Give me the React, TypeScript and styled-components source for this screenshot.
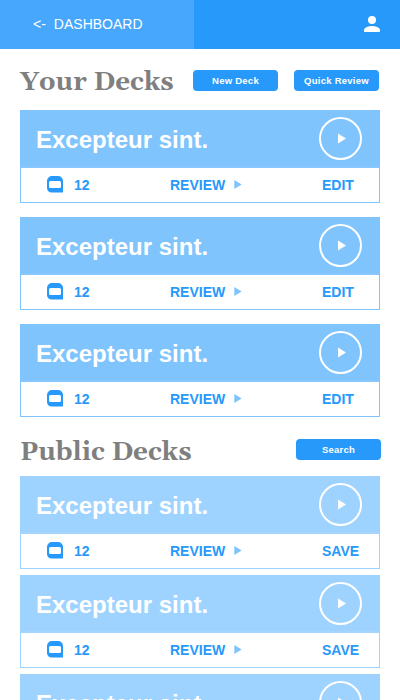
import React from "react";
import styled, { createGlobalStyle } from "styled-components";

const GlobalStyle = createGlobalStyle`
  * { box-sizing: border-box; }
  html, body { margin: 0; padding: 0; background: #fff; }
  body { height: 700px; overflow: hidden; font-family: "Liberation Sans", Arial, sans-serif; }
  button { font-family: inherit; border: 0; padding: 0; background: none; }
  svg { display: block; }
`;

const Page = styled.div`
  width: 400px;
  height: 700px;
  overflow: hidden;
`;

const TopBar = styled.header`
  display: flex;
  justify-content: space-between;
  height: 49px;
  background: #2699fb;
`;

const BackLink = styled.a`
  display: flex;
  align-items: center;
  gap: 8px;
  width: 194px;
  padding: 0 0 1px 33px;
  background: #47a7fd;
  color: #fff;
  font-size: 14px;
  line-height: 16px;
`;

const Account = styled.button`
  display: flex;
  align-items: center;
  padding: 0 20px 1px 0;
`;

const SectionHead = styled.div<{ $top: number; $height: number; $right: number }>`
  display: flex;
  gap: 16px;
  margin-top: ${(p) => p.$top}px;
  height: ${(p) => p.$height}px;
  padding: 0 ${(p) => p.$right}px 0 20px;
`;

const Heading = styled.h1<{ $shift: number }>`
  flex: 1;
  margin: ${(p) => p.$shift}px 0 0;
  color: #7f7f7f;
  font-family: Georgia, Gelasio, "Liberation Serif", serif;
  font-size: 26px;
  font-weight: 700;
  line-height: 34px;
  letter-spacing: 0.03px;
  white-space: nowrap;
`;

const PillButton = styled.button`
  flex: none;
  width: 85px;
  height: 21px;
  border-radius: 4px;
  background: #2699fb;
  color: #fff;
  font-size: 9.5px;
  letter-spacing: 0.25px;
  font-weight: 700;
  line-height: 21px;
  text-align: center;
`;

const DeckList = styled.div<{ $gap: number }>`
  display: flex;
  flex-direction: column;
  gap: ${(p) => p.$gap}px;
  padding: 0 20px;
`;

const Card = styled.article<{ $tone: string }>`
  height: 93px;
  border: 1px solid ${(p) => p.$tone};
`;

const CardTop = styled.div<{ $tone: string; $edge: string }>`
  display: flex;
  align-items: center;
  justify-content: space-between;
  height: 57px;
  padding: 0 17px 0 15px;
  background: ${(p) => p.$tone};
  border-bottom: 2px solid ${(p) => p.$edge};
`;

const CardTitle = styled.h2`
  margin: 2px 0 0;
  color: #fff;
  font-size: 24px;
  font-weight: 700;
  line-height: 28px;
`;

const PlayButton = styled.button`
  width: 43px;
  height: 43px;
`;

const CardActions = styled.div`
  display: grid;
  grid-template-columns: 123px 152px 1fr;
  height: 34px;
  padding-left: 26px;
  color: #2699fb;
  font-size: 14px;
  font-weight: 700;
  line-height: 16px;
`;

const Action = styled.div<{ $gap?: number }>`
  display: flex;
  align-items: center;
  gap: ${(p) => p.$gap ?? 0}px;

  svg { margin-bottom: 1px; }
`;

const DeckIcon = () => (
  <svg width="16" height="17" viewBox="0 0 16 17">
    <path
      fill="#2699fb"
      fillRule="evenodd"
      d="M5 0h6a5 5 0 0 1 5 5v11.500H4.500A4.500 4.500 0 0 1 0 12V5a5 5 0 0 1 5-5ZM3.500 5Q2 5 2 6.500V10.500Q2 12 3.500 12H12.500Q14 12 14 10.500V6.500Q14 5 12.500 5Z"
    />
  </svg>
);

const UserIcon = () => (
  <svg width="16" height="16" viewBox="0 0 16 16" fill="#fff">
    <circle cx="8" cy="4" r="4" />
    <path d="M8 10c-2.700 0-8 1.340-8 4v2h16v-2c0-2.660-5.300-4-8-4Z" />
  </svg>
);

interface DeckProps {
  tone: string;
  edge: string;
  action: string;
}

const Deck = ({ tone, edge, action }: DeckProps) => (
  <Card $tone={tone}>
    <CardTop $tone={tone} $edge={edge}>
      <CardTitle>Excepteur sint.</CardTitle>
      <PlayButton aria-label="Play">
        <svg width="43" height="43" viewBox="0 0 43 43">
          <circle cx="21.5" cy="21.5" r="20.5" fill="none" stroke="#fff" strokeWidth="2" />
          <path d="M19 16.500v10l8-5Z" fill="#fff" />
        </svg>
      </PlayButton>
    </CardTop>
    <CardActions>
      <Action $gap={11}>
        <DeckIcon />
        <span>12</span>
      </Action>
      <Action $gap={9}>
        <span>REVIEW</span>
        <svg width="8" height="9" viewBox="0 0 8 9">
          <path d="M.3 0v9l7.400-4.500Z" fill="#7fc4fd" />
        </svg>
      </Action>
      <Action>
        <span>{action}</span>
      </Action>
    </CardActions>
  </Card>
);

export default function App() {
  return (
    <Page>
      <GlobalStyle />
      <TopBar>
        <BackLink>
          <span>&lt;-</span>
          <span>DASHBOARD</span>
        </BackLink>
        <Account aria-label="Account">
          <UserIcon />
        </Account>
      </TopBar>
      <SectionHead $top={21} $height={40} $right={21}>
        <Heading $shift={-4}>Your Decks</Heading>
        <PillButton>New Deck</PillButton>
        <PillButton>Quick Review</PillButton>
      </SectionHead>
      <DeckList $gap={14}>
        {[0, 1, 2].map((i) => (
          <Deck key={i} tone="#7fc4fd" edge="#87c6ff" action="EDIT" />
        ))}
      </DeckList>
      <SectionHead $top={22} $height={37} $right={19}>
        <Heading $shift={-3}>Public Decks</Heading>
        <PillButton>Search</PillButton>
      </SectionHead>
      <DeckList $gap={6}>
        {[0, 1, 2].map((i) => (
          <Deck key={i} tone="#9fd3ff" edge="#a5d5ff" action="SAVE" />
        ))}
      </DeckList>
    </Page>
  );
}
